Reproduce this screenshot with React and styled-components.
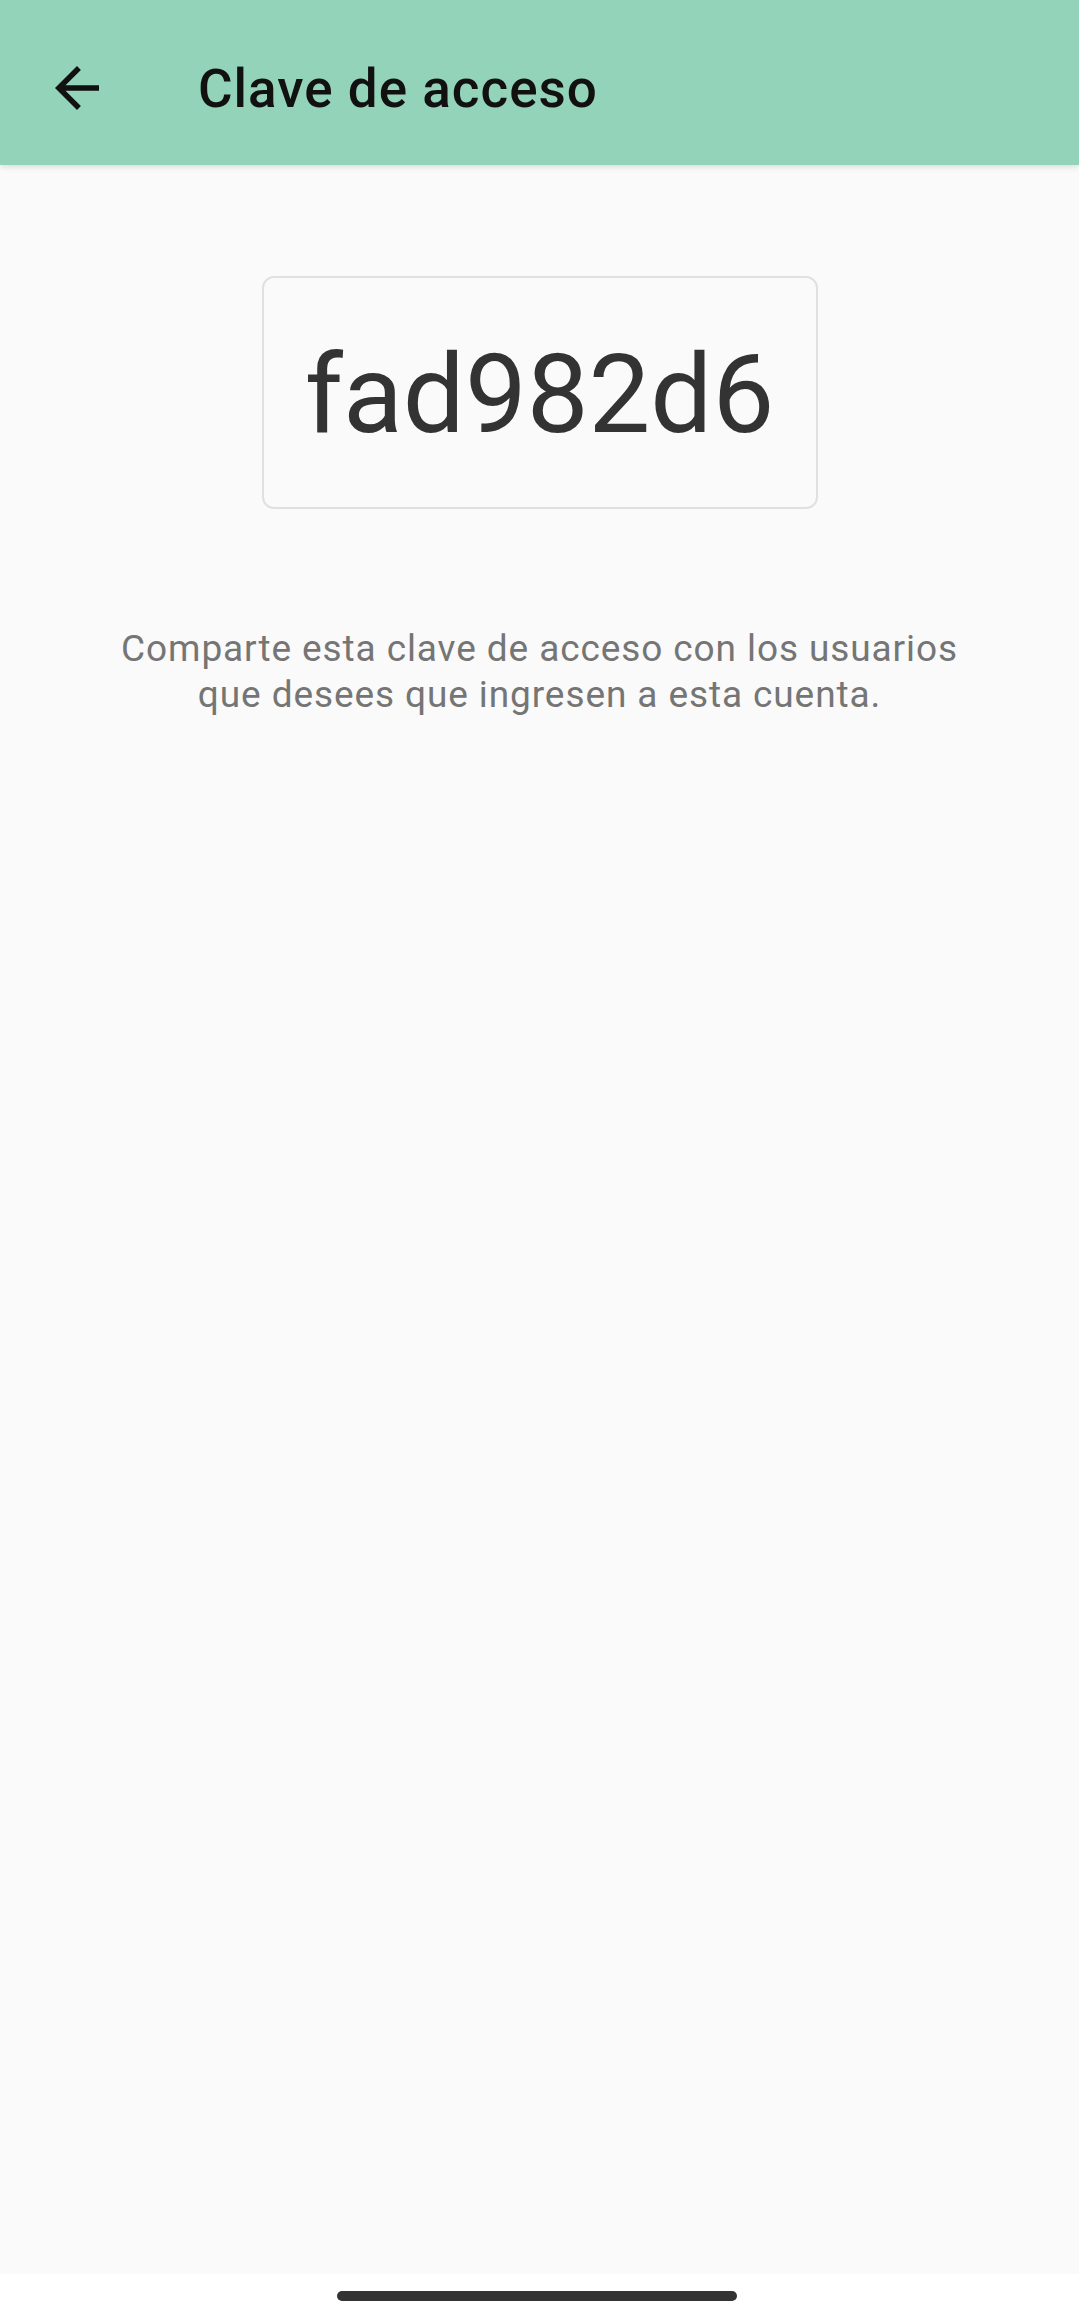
import React from 'react';
import styled, { createGlobalStyle } from 'styled-components';

const GlobalStyle = createGlobalStyle`
  html, body {
    margin: 0;
    padding: 0;
    background: #FAFAFA;
    font-family: Roboto, "Noto Sans", sans-serif;
  }
`;

const Screen = styled.div`
  display: flex;
  flex-direction: column;
  width: 1079px;
  height: 2318px;
  background: #FAFAFA;
  overflow: hidden;
`;

const AppBar = styled.header`
  display: flex;
  align-items: center;
  height: 165px;
  padding-top: 10px;
  box-sizing: border-box;
  background: #93D3B9;
  box-shadow: 0 2px 6px rgba(0, 0, 0, 0.12);
  position: relative;
  z-index: 1;
`;

const BackButton = styled.button`
  display: flex;
  align-items: center;
  justify-content: center;
  width: 66px;
  height: 66px;
  margin-left: 44px;
  padding: 0;
  border: none;
  background: transparent;
  color: #111;
  cursor: pointer;
`;

const Title = styled.h1`
  margin: 0 0 0 88px;
  padding-top: 2px;
  font-size: 53px;
  font-weight: 500;
  color: #111;
  letter-spacing: 1px;
`;

const Content = styled.main`
  flex: 1;
  display: flex;
  flex-direction: column;
  align-items: center;
  padding-top: 111px;
`;

const KeyBox = styled.div`
  display: flex;
  align-items: center;
  justify-content: center;
  width: 556px;
  height: 233px;
  padding-top: 4px;
  box-sizing: border-box;
  border: 2px solid #E0E0E0;
  border-radius: 12px;
  font-size: 110px;
  color: #333;
`;

const Hint = styled.p`
  margin: 117px 0 0;
  width: 960px;
  text-align: center;
  font-size: 37px;
  line-height: 46px;
  letter-spacing: 0.9px;
  color: #757575;
`;

const NavArea = styled.div`
  display: flex;
  align-items: center;
  justify-content: center;
  height: 44px;
  padding-right: 6px;
  background: #FFFFFF;
`;

const Handle = styled.div`
  width: 400px;
  height: 10px;
  border-radius: 5px;
  background: #333;
`;

const ArrowBack = () => (
  <svg width="66" height="66" viewBox="0 0 24 24" fill="currentColor">
    <path d="M20 11H7.83l5.59-5.59L12 4l-8 8 8 8 1.41-1.41L7.83 13H20v-2z" />
  </svg>
);

export default function App() {
  return (
    <Screen>
      <GlobalStyle />
      <AppBar>
        <BackButton aria-label="Atrás">
          <ArrowBack />
        </BackButton>
        <Title>Clave de acceso</Title>
      </AppBar>
      <Content>
        <KeyBox>fad982d6</KeyBox>
        <Hint>
          Comparte esta clave de acceso con los usuarios
          <br />
          que desees que ingresen a esta cuenta.
        </Hint>
      </Content>
      <NavArea>
        <Handle />
      </NavArea>
    </Screen>
  );
}
